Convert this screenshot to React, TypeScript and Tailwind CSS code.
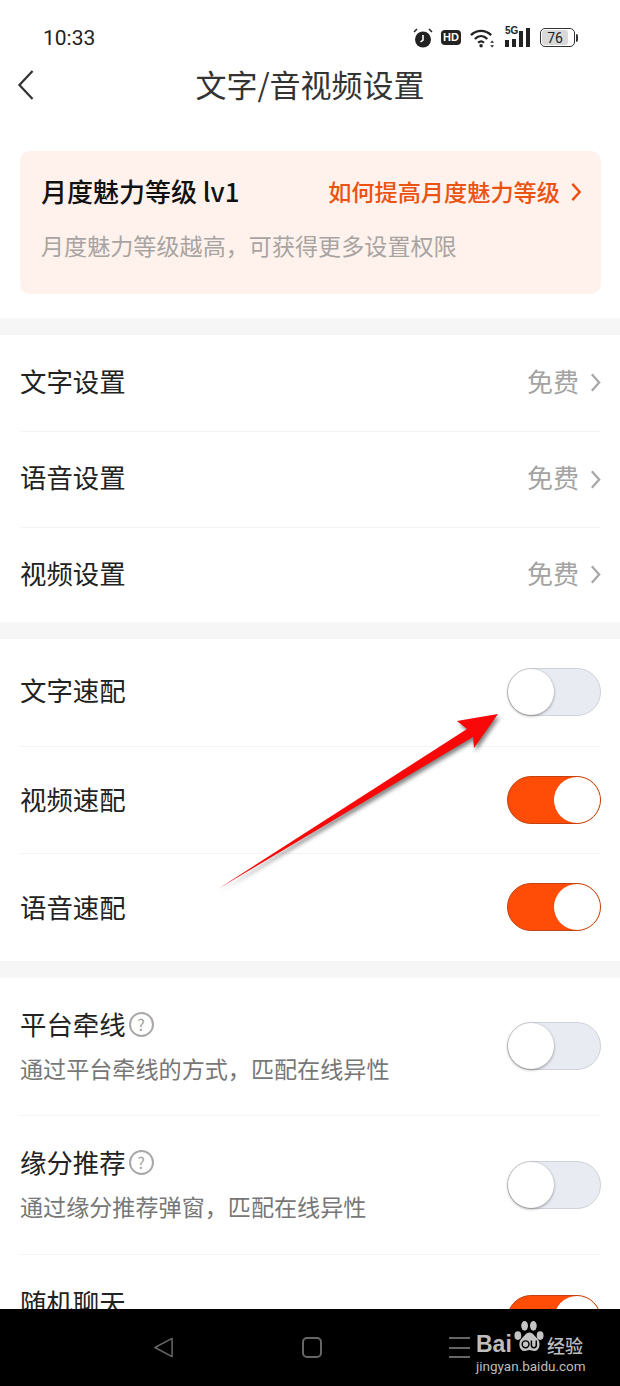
import React from 'react';

const cjk = "font-['Noto_Sans_CJK_SC','Noto_Sans',sans-serif]";

const Toggle: React.FC<{ on?: boolean }> = ({ on = false }) =>
  on ? (
    <div className="relative h-[48px] w-[94px] shrink-0 rounded-full border border-[#c2410c] bg-[#ff4d08]">
      <div className="absolute right-[0px] top-[0px] h-[46px] w-[46px] rounded-full bg-white" />
    </div>
  ) : (
    <div className="relative h-[48px] w-[94px] shrink-0 rounded-full border border-[#cfd2d8] bg-[#e8ebf2]">
      <div className="absolute left-[0px] top-[0px] h-[46px] w-[46px] rounded-full bg-white shadow-[0_1px_3px_rgba(0,0,0,0.4)]" />
    </div>
  );

const Chevron: React.FC<{ className: string; color: string; width?: number }> = ({ className, color, width = 2.5 }) => (
  <svg viewBox="0 0 12 22" className={className} fill="none" stroke={color} strokeWidth={width}>
    <path d="M2 2l8 9-8 9" />
  </svg>
);

const LinkRow: React.FC<{ label: string; h: string; last?: boolean }> = ({ label, h, last }) => (
  <div className={`flex items-center justify-between pb-[5px] ${h} ${last ? '' : 'border-b border-[#f4f4f4]'}`}>
    <span className="text-[26.4px] leading-[38px] text-[#222]">{label}</span>
    <div className="flex items-center gap-[11px]">
      <span className="text-[26px] leading-[38px] text-[#a3a3a3]">免费</span>
      <Chevron className="mt-[4px] h-[21px] w-[11px]" color="#a8a8a8" />
    </div>
  </div>
);

const SwitchRow: React.FC<{ label: string; on?: boolean; last?: boolean; h: string; labelTop: string }> = ({ label, on, last, h, labelTop }) => (
  <div className={`relative flex items-center justify-between ${h} ${last ? '' : 'border-b border-[#f4f4f4]'}`}>
    <span className={`${labelTop} text-[26.4px] leading-[38px] text-[#222]`}>{label}</span>
    <div className="mt-[-1px]">
      <Toggle on={on} />
    </div>
  </div>
);

const HelpRow: React.FC<{ label: string; desc: string; h: string; toggleTop: string }> = ({ label, desc, h, toggleTop }) => (
  <div className={`flex items-start justify-between border-b border-[#f4f4f4] ${h}`}>
    <div className="pt-[27px]">
      <div className="flex items-center gap-[3px]">
        <span className="text-[26.4px] leading-[38px] text-[#222]">{label}</span>
        <span className="flex h-[25px] w-[25px] items-center justify-center rounded-full border-2 border-[#a8a8a8] text-[16px] leading-none text-[#a0a0a0]">?</span>
      </div>
      <div className="mt-[9px] text-[23.1px] leading-[32px] text-[#777]">{desc}</div>
    </div>
    <div className={toggleTop}>
      <Toggle />
    </div>
  </div>
);

const StatusIcons: React.FC = () => (
  <div className="flex items-center">
    {/* alarm */}
    <svg viewBox="0 0 20 20" className="h-[20px] w-[20px]">
      <circle cx="10" cy="11.5" r="8" fill="#222" />
      <path d="M10 7v5l-2.5 2" stroke="#fff" strokeWidth="1.6" fill="none" />
      <path d="M1 4l3-3M19 4l-3-3" stroke="#222" strokeWidth="1.5" />
    </svg>
    <div className="ml-[8px] flex h-[15px] w-[20px] items-center justify-center rounded-[4px] bg-[#222] font-['Liberation_Sans',sans-serif] text-[11px] font-bold leading-none text-white">HD</div>
    {/* wifi */}
    <svg viewBox="0 0 26 20" className="ml-[9px] h-[20px] w-[25px]" fill="none" stroke="#222" strokeWidth="2.4">
      <path d="M1 7c6-6 15-6 21 0M5 11c4-4 9-4 13 0M8.5 15c2-2 4-2 6 0" />
      <circle cx="11.5" cy="18" r="1.8" fill="#222" stroke="none" />
      <path d="M23 12.5l2 2.5h-4zM23 20l2-2.5h-4z" fill="#222" stroke="none" />
    </svg>
    <div className="relative ml-[10px] h-[19px] w-[26px]">
      <span className="absolute left-0 top-[-2px] font-['Liberation_Sans',sans-serif] text-[10px] font-bold leading-[10px] text-[#222]">5G</span>
      <div className="absolute bottom-0 left-0 flex items-end gap-[3px]">
        <div className="h-[7px] w-[4px] bg-[#222]" />
        <div className="h-[8px] w-[4px] bg-[#222]" />
        <div className="h-[16px] w-[4px] bg-[#222]" />
        <div className="h-[19px] w-[4px] bg-[#222]" />
      </div>
    </div>
    <div className="ml-[9px] flex items-center">
      <div className="flex h-[19px] w-[35px] items-center rounded-[5px] border border-[#333] p-[1px]">
        <div className="flex h-full w-[26px] items-center justify-center rounded-[3px] bg-[#d9d9d9] font-['Roboto',sans-serif] text-[14px] leading-none text-[#222]">76</div>
      </div>
      <div className="ml-[1px] h-[8px] w-[2px] rounded-r bg-[#333]" />
    </div>
  </div>
);

export default function App() {
  return (
    <div className={`relative h-[1386px] w-[620px] overflow-hidden bg-white ${cjk}`}>
      <div className="flex h-[55px] items-center justify-between pl-[43px] pr-[42px] pt-[20px]">
        <span className="font-['Roboto',sans-serif] text-[21px] leading-[26px] text-[#222]">10:33</span>
        <StatusIcons />
      </div>

      <div className="relative flex h-[53px] items-center justify-center pb-[2px]">
        <svg viewBox="0 0 18 32" className="absolute left-[17px] top-[15px] h-[30px] w-[18px]" fill="none" stroke="#333" strokeWidth="2.4">
          <path d="M16 1L2 16l14 15" />
        </svg>
        <span className="pt-[6px] text-[31px] leading-[40px] text-[#333]">文字/音视频设置</span>
      </div>

      <div className="pb-[24px] pl-[20px] pr-[19px] pt-[43px]">
        <div className="h-[143px] rounded-[10px] bg-[#fff2ed] pl-[21px] pr-[19px] pt-[22px]">
          <div className="flex items-center justify-between">
            <span className="text-[26px] font-medium leading-[36px] text-[#111]">月度魅力等级 lv1</span>
            <div className="flex items-center gap-[10px]">
              <span className="text-[23.2px] font-medium leading-[36px] text-[#ea5312]">如何提高月度魅力等级</span>
              <Chevron className="mt-[2px] h-[20px] w-[12px]" color="#ea5312" width={2.8} />
            </div>
          </div>
          <div className="mt-[20px] text-[23.1px] leading-[32px] text-[#a8a4a2]">月度魅力等级越高，可获得更多设置权限</div>
        </div>
      </div>

      <div className="h-[17px] bg-[#f6f6f6]" />
      <div className="pl-[20px] pr-[19px]">
        <LinkRow label="文字设置" h="h-[97px]" />
        <LinkRow label="语音设置" h="h-[96px]" />
        <LinkRow label="视频设置" h="h-[94px]" last />
      </div>

      <div className="h-[17px] bg-[#f6f6f6]" />
      <div className="pl-[20px] pr-[19px]">
        <SwitchRow label="文字速配" h="h-[108px]" labelTop="mt-[-5px]" />
        <SwitchRow label="视频速配" on h="h-[107px]" labelTop="mt-[-3px]" />
        <SwitchRow label="语音速配" on last h="h-[107px]" labelTop="mt-[-1px]" />
      </div>

      <div className="h-[17px] bg-[#f6f6f6]" />
      <div className="pl-[20px] pr-[19px]">
        <HelpRow label="平台牵线" desc="通过平台牵线的方式，匹配在线异性" h="h-[138px]" toggleTop="pt-[44px]" />
        <HelpRow label="缘分推荐" desc="通过缘分推荐弹窗，匹配在线异性" h="h-[139px]" toggleTop="pt-[45px]" />
        <div className="flex items-start justify-between pt-[28px]">
          <span className="text-[26.4px] leading-[38px] text-[#222]">随机聊天</span>
          <div className="mt-[12px]">
            <Toggle on />
          </div>
        </div>
      </div>

      {/* red annotation arrow drawn over the screenshot */}
      <svg className="absolute left-0 top-0 h-[1386px] w-[620px]" viewBox="0 0 620 1386">
        <path d="M218 889L467 729L457 721L498 714L474 748L473 737Z" fill="#000" opacity="0.5" transform="translate(2 3)" style={{ filter: 'blur(2px)' }} />
        <path d="M218 889L467 729L457 721L498 714L474 748L473 737Z" fill="#f80808" />
      </svg>

      {/* system nav bar */}
      <div className="absolute bottom-0 left-0 h-[77px] w-[620px] bg-black">
        <svg viewBox="0 0 22 22" className="absolute left-[153px] top-[28px] h-[21px] w-[21px]" fill="none" stroke="#666" strokeWidth="1.6" strokeLinejoin="round">
          <path d="M20 1.5L2 11l18 9.5z" />
        </svg>
        <div className="absolute left-[302px] top-[28px] h-[21px] w-[20px] rounded-[5px] border-2 border-[#666]" />
        <div className="absolute left-[449px] top-[28px] flex h-[21px] w-[21px] flex-col justify-between">
          <div className="h-[2px] bg-[#666]" />
          <div className="h-[2px] bg-[#666]" />
          <div className="h-[2px] bg-[#666]" />
        </div>
        {/* baidu watermark */}
        <div className="absolute left-[476px] top-[23px] font-['Liberation_Sans',sans-serif] text-[23px] font-bold leading-[24px] text-[#bdbdbd]">Bai</div>
        <svg viewBox="0 0 34 34" className="absolute left-[512px] top-[11px] h-[33px] w-[33px]">
          <ellipse cx="6" cy="16" rx="3.5" ry="4.5" fill="#c4c4c4" />
          <ellipse cx="13" cy="6" rx="3.5" ry="5" fill="#c4c4c4" />
          <ellipse cx="22" cy="6" rx="3.5" ry="5" fill="#c4c4c4" />
          <ellipse cx="29" cy="16" rx="3.5" ry="4.5" fill="#c4c4c4" />
          <path d="M18 13c4 0 5 4 8 6 4 3 3 13-3 13-2 0-3-1-5-1s-3 1-5 1c-6 0-7-10-3-13 3-2 4-6 8-6z" fill="#c4c4c4" />
          <circle cx="14" cy="25" r="3.5" fill="none" stroke="#000" strokeWidth="1.5" />
          <path d="M20 21v5a2.5 2.5 0 0 0 5 0v-5" fill="none" stroke="#000" strokeWidth="1.5" />
        </svg>
        <div className="absolute left-[547px] top-[25px] text-[18px] font-medium leading-[22px] text-[#bdbdbd]">经验</div>
        <div className="absolute left-[476px] top-[49px] font-['Roboto',sans-serif] text-[13.5px] leading-[16px] text-[#bdbdbd]">jingyan.baidu.com</div>
      </div>
    </div>
  );
}
